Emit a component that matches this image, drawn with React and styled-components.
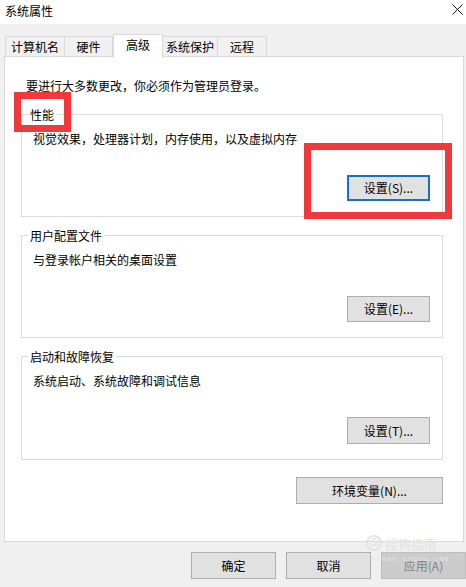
import React from "react";
import styled, { createGlobalStyle } from "styled-components";

const GlobalStyle = createGlobalStyle`
  html, body {
    margin: 0;
    padding: 0;
    background: #f0f0f0;
  }
  body {
    font-family: "Noto Sans CJK SC", "Liberation Sans", sans-serif;
    font-size: 12px;
    color: #000;
  }
`;

const Window = styled.div`
  position: relative;
  width: 466px;
  height: 587px;
  overflow: hidden;
  background: #f0f0f0;
`;

const TitleBar = styled.div`
  height: 24px;
  background: #fff;
  display: flex;
  align-items: center;
  justify-content: space-between;
  padding: 0 2px 2px 5px;
  box-sizing: border-box;
`;

const Title = styled.span`
  font-size: 12px;
  line-height: 16px;
`;

const Close = styled.svg`
  width: 11px;
  height: 11px;
  margin-right: 1px;
  margin-top: -4px;
`;

const Tabs = styled.div`
  display: flex;
  align-items: flex-end;
  height: 24px;
  margin: 9px 0 0 5px;
  position: relative;
  z-index: 1;
`;

const Tab = styled.div`
  width: ${(p) => p.$w}px;
  height: ${(p) => (p.$active ? 24 : 21)}px;
  box-sizing: border-box;
  display: flex;
  align-items: center;
  justify-content: center;
  line-height: 16px;
  background: ${(p) => (p.$active ? "#fff" : "#f0f0f0")};
  border: 1px solid #d9d9d9;
  border-bottom: ${(p) => (p.$active ? "none" : "1px solid #d9d9d9")};
  border-left: ${(p) => (p.$first || p.$active ? "1px solid #d9d9d9" : "none")};
  padding-bottom: ${(p) => (p.$active ? 3 : 0)}px;
  margin-bottom: ${(p) => (p.$active ? -1 : 0)}px;
`;

const Panel = styled.div`
  margin: -1px 2px 0 4px;
  height: 486px;
  box-sizing: border-box;
  background: #fff;
  border: 1px solid #d9d9d9;
  padding: 21px 20px 0 16px;
  display: flex;
  flex-direction: column;
`;

const Intro = styled.div`
  line-height: 16px;
  padding-left: 5px;
`;

const Group = styled.div`
  border: 1px solid #dcdcdc;
  margin-top: ${(p) => p.$top}px;
  padding: 0 12px 15px 11px;
  display: flex;
  flex-direction: column;
`;

const Legend = styled.div`
  align-self: flex-start;
  margin: -8px 0 0 -5px;
  padding: 0 2px;
  background: #fff;
  line-height: 16px;
`;

const Desc = styled.div`
  margin-top: 8px;
  line-height: 16px;
`;

const Button = styled.button`
  font-family: inherit;
  font-size: 12px;
  color: ${(p) => (p.$disabled ? "#838383" : "#000")};
  width: ${(p) => p.$w}px;
  height: ${(p) => p.$h || 26}px;
  box-sizing: border-box;
  background: ${(p) => (p.$disabled ? "#cccccc" : "#e1e1e1")};
  border: ${(p) =>
    p.$focus
      ? "2px solid #1a6fc4"
      : p.$disabled
      ? "1px solid #bfbfbf"
      : "1px solid #adadad"};
  padding: 0;
  line-height: 16px;
  align-self: flex-end;
  margin-top: ${(p) => p.$top || 0}px;
  flex-shrink: 0;
`;

const Footer = styled.div`
  display: flex;
  justify-content: flex-end;
  gap: 10px;
  margin-top: 10px;
  padding-right: 0;
`;

const RedBox = styled.div`
  position: absolute;
  left: ${(p) => p.$x}px;
  top: ${(p) => p.$y}px;
  width: ${(p) => p.$w}px;
  height: ${(p) => p.$h}px;
  box-sizing: border-box;
  border: 7px solid #ef393b;
  pointer-events: none;
`;

const Watermark = styled.div`
  position: absolute;
  left: 366px;
  top: 535px;
  display: flex;
  flex-direction: column;
  align-items: flex-start;
  color: rgba(255, 255, 255, 0.75);
  pointer-events: none;
`;

const WmTop = styled.div`
  display: flex;
  align-items: center;
  gap: 3px;
  font-size: 13px;
  line-height: 15px;
  color: rgba(225, 225, 225, 0.9);
`;

const WmBadge = styled.span`
  width: 12px;
  height: 12px;
  border-radius: 50%;
  border: 2px solid rgba(225, 225, 225, 0.9);
  display: flex;
  align-items: center;
  justify-content: center;
  font-size: 10px;
  line-height: 10px;
  font-weight: bold;
  font-family: "Liberation Sans", sans-serif;
`;

const WmUrl = styled.div`
  font-family: "DejaVu Sans Mono", monospace;
  font-size: 7px;
  line-height: 9px;
  letter-spacing: 1px;
  margin-top: 4px;
  color: rgba(230, 230, 230, 0.95);
`;

export default function App() {
  return (
    <Window>
      <GlobalStyle />
      <TitleBar>
        <Title>系统属性</Title>
        <Close viewBox="0 0 11 11">
          <path d="M0.5 0.5 L10.5 10.5 M10.5 0.5 L0.5 10.5" stroke="#111" strokeWidth="1" />
        </Close>
      </TitleBar>

      <Tabs>
        <Tab $w={60} $first>计算机名</Tab>
        <Tab $w={48}>硬件</Tab>
        <Tab $w={50} $active>高级</Tab>
        <Tab $w={55}>系统保护</Tab>
        <Tab $w={49}>远程</Tab>
      </Tabs>

      <Panel>
        <Intro>要进行大多数更改，你必须作为管理员登录。</Intro>

        <Group $top={20}>
          <Legend>性能</Legend>
          <Desc>视觉效果，处理器计划，内存使用，以及虚拟内存</Desc>
          <Button $w={83} $top={28} $focus>设置(S)...</Button>
        </Group>

        <Group $top={18}>
          <Legend>用户配置文件</Legend>
          <Desc>与登录帐户相关的桌面设置</Desc>
          <Button $w={83} $top={28}>设置(E)...</Button>
        </Group>

        <Group $top={18}>
          <Legend>启动和故障恢复</Legend>
          <Desc>系统启动、系统故障和调试信息</Desc>
          <Button $w={83} $top={28} $h={27}>设置(T)...</Button>
        </Group>

        <Button $w={147} $h={27} $top={17}>环境变量(N)...</Button>
      </Panel>

      <Footer>
        <Button $w={85} $h={27}>确定</Button>
        <Button $w={85} $h={27}>取消</Button>
        <Button $w={85} $h={27} $disabled>应用(A)</Button>
      </Footer>

      <RedBox $x={14} $y={92} $w={57} $h={40} />
      <RedBox $x={304} $y={143} $w={148} $h={76} />

      <Watermark>
        <WmTop>
          <WmBadge>S</WmBadge>
          搜狗指南
        </WmTop>
        <WmUrl>zhinan.sogou.com</WmUrl>
      </Watermark>
    </Window>
  );
}
